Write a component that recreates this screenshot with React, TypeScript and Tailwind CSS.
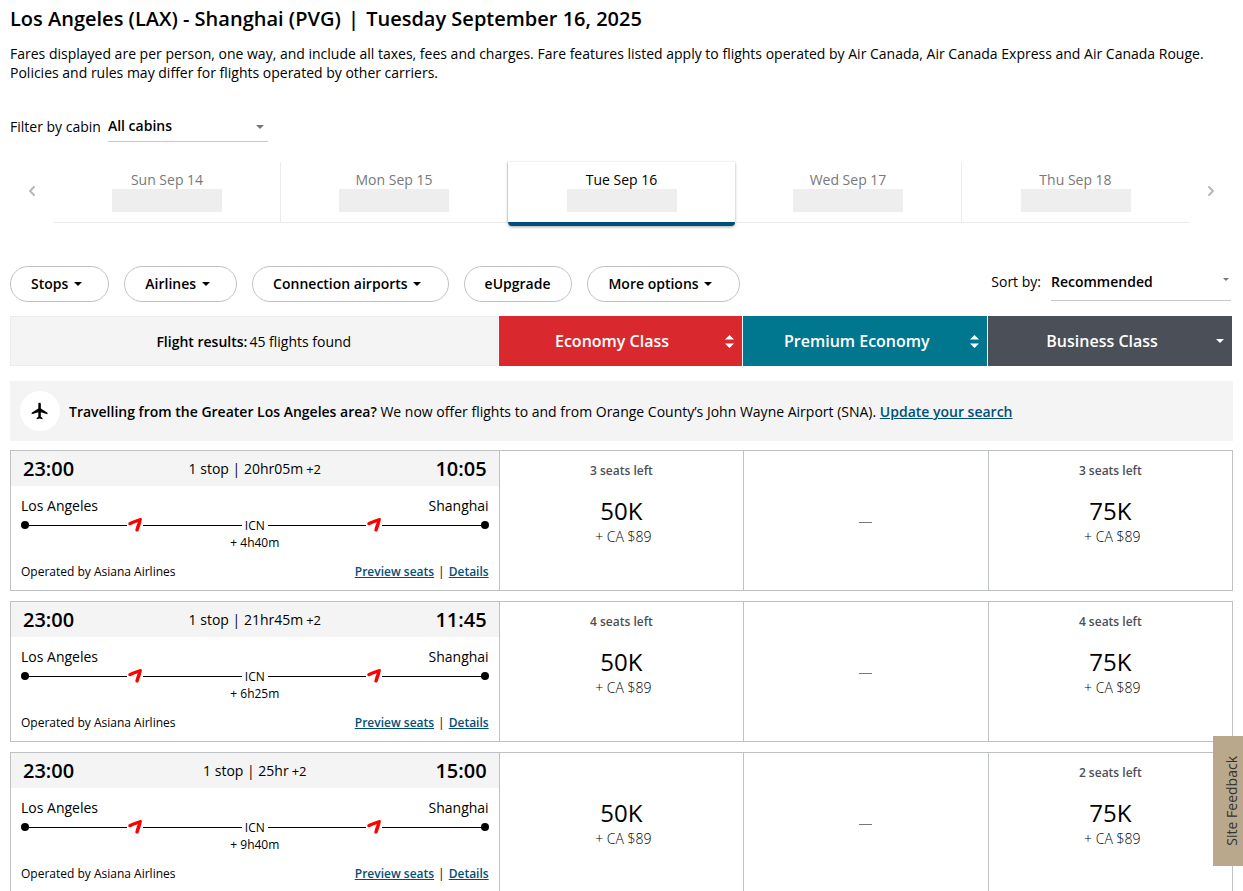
import { useState } from 'react';
import { ChevronLeft, ChevronRight } from 'lucide-react';
import { MdFlight } from 'react-icons/md';

const days = ['Sun Sep 14', 'Mon Sep 15', 'Tue Sep 16', 'Wed Sep 17', 'Thu Sep 18'];

const filters = [
  { label: 'Stops', menu: true },
  { label: 'Airlines', menu: true },
  { label: 'Connection airports', menu: true },
  { label: 'eUpgrade', menu: false },
  { label: 'More options', menu: true },
];

type Fare = { seats: number; points: string; cash: string } | null;

type Flight = {
  id: string;
  departs: string;
  arrives: string;
  duration: string;
  via: string;
  layover: string;
  fares: Fare[];
};

const flights: Flight[] = [
  {
    id: '1', departs: '23:00', arrives: '10:05', duration: '20hr05m', via: 'ICN', layover: '4h40m',
    fares: [{ seats: 3, points: '50K', cash: '$89' }, null, { seats: 3, points: '75K', cash: '$89' }],
  },
  {
    id: '2', departs: '23:00', arrives: '11:45', duration: '21hr45m', via: 'ICN', layover: '6h25m',
    fares: [{ seats: 4, points: '50K', cash: '$89' }, null, { seats: 4, points: '75K', cash: '$89' }],
  },
  {
    id: '3', departs: '23:00', arrives: '15:00', duration: '25hr', via: 'ICN', layover: '9h40m',
    fares: [{ seats: 0, points: '50K', cash: '$89' }, null, { seats: 2, points: '75K', cash: '$89' }],
  },
];

function Caret({ className }: { className?: string }) {
  return (
    <svg viewBox="0 0 8 4" className={className} fill="currentColor" aria-hidden="true">
      <path d="M0 0h8L4 4z" />
    </svg>
  );
}

function SortArrows() {
  return (
    <svg viewBox="0 0 9 13" className="w-[9px] h-[13px]" fill="currentColor" aria-hidden="true">
      <path d="M0 4.5h9L4.5 0zM0 8.5h9L4.5 13z" />
    </svg>
  );
}

function AsianaMark() {
  return (
    <svg viewBox="0 0 16 16" className="w-4 h-4 shrink-0" fill="#ff0000" aria-hidden="true">
      <path d="M1.2 6.4Q1.4 5.3 3 4.7Q8 2.6 13.2 1Q15 .8 14.9 2.4Q13.6 8.6 11.6 13.4Q10.9 15 9.2 14.5Q8 14 8.4 12.4Q9.2 9.2 10.8 5.3Q7 6.2 3.4 8.3Q1.2 8.4 1.2 6.4z" />
    </svg>
  );
}

function DateStrip() {
  const [selected, setSelected] = useState('Tue Sep 16');

  return (
    <div className="mt-5 flex h-[61px] items-stretch">
      <button aria-label="Previous dates" className="flex w-11 shrink-0 items-center justify-center pb-1 text-[#b5b8bb]">
        <ChevronLeft className="h-4 w-4" strokeWidth={3} />
      </button>
      <div className="grid flex-1 grid-cols-5">
        {days.map((day) =>
          day === selected ? (
            <button
              key={day}
              className="-mb-[3px] flex flex-col items-center rounded-b-sm border-b-4 border-[#004f7a] bg-white pt-2 text-sm leading-[19px] text-black shadow-[0_1px_3px_rgba(0,0,0,0.35)]"
            >
              <span>{day}</span>
              <span className="h-[23px] w-[110px] bg-[#eeeeee]" />
            </button>
          ) : (
            <button
              key={day}
              onClick={() => setSelected(day)}
              className="flex flex-col items-center border-r border-b border-[#ebebeb] pt-2 text-sm leading-[19px] text-[#77797c] last:border-r-0"
            >
              <span>{day}</span>
              <span className="h-[23px] w-[110px] bg-[#eeeeee]" />
            </button>
          ),
        )}
      </div>
      <button aria-label="Next dates" className="flex w-11 shrink-0 items-center justify-center pb-1 text-[#b5b8bb]">
        <ChevronRight className="h-4 w-4" strokeWidth={3} />
      </button>
    </div>
  );
}

function FareCell({ fare }: { fare: Fare }) {
  if (!fare) {
    return (
      <div className="flex items-center justify-center border-l border-[#bfc2c5] pt-1">
        <span className="h-px w-[13px] bg-[#75787b]" aria-label="Not available" />
      </div>
    );
  }

  return (
    <button className="flex flex-col items-center border-l border-[#bfc2c5] pt-2.5">
      <span className="h-5 text-xs leading-5 font-semibold text-[#4b4f54]">
        {fare.seats > 0 && `${fare.seats} seats left`}
      </span>
      <span className="mt-3 text-2xl leading-9">{fare.points}</span>
      <span className="ml-1 text-sm leading-4 font-light">+ CA {fare.cash}</span>
    </button>
  );
}

function FlightCard({ flight }: { flight: Flight }) {
  return (
    <article className="grid h-[141px] grid-cols-[399fr_200fr_200fr_200fr] border border-[#bfc2c5]">
      <div className="flex flex-col">
        <div className="flex h-[35px] items-center justify-between bg-[#f4f4f4] px-3">
          <span className="text-xl font-semibold">{flight.departs}</span>
          <span className="text-sm">
            1 stop | {flight.duration}
            <span className="ml-[3px] text-[13px]">+2</span>
          </span>
          <span className="text-xl font-semibold">{flight.arrives}</span>
        </div>
        <div className="px-2.5 pt-2.5">
          <div className="flex justify-between text-sm">
            <span>Los Angeles</span>
            <span>Shanghai</span>
          </div>
          <div className="mt-px flex h-4 items-center">
            <span className="h-2 w-2 rounded-full bg-black" />
            <span className="h-px flex-1 bg-black" />
            <AsianaMark />
            <span className="h-px flex-1 bg-black" />
            <span className="px-[3px] pt-0.5 text-xs">{flight.via}</span>
            <span className="h-px flex-1 bg-black" />
            <AsianaMark />
            <span className="h-px flex-1 bg-black" />
            <span className="h-2 w-2 rounded-full bg-black" />
          </div>
          <p className="mt-0.5 text-center text-xs leading-4">+ {flight.layover}</p>
          <div className="mt-[11px] flex justify-between text-xs leading-5">
            <span>Operated by Asiana Airlines</span>
            <span>
              <a href="#seats" className="font-semibold text-[#005078] underline">Preview seats</a>
              <span className="mx-1">|</span>
              <a href="#details" className="font-semibold text-[#005078] underline">Details</a>
            </span>
          </div>
        </div>
      </div>
      {flight.fares.map((fare, i) => (
        <FareCell key={i} fare={fare} />
      ))}
    </article>
  );
}

export default function App() {
  const [cabin, setCabin] = useState('All cabins');
  const [sort, setSort] = useState('Recommended');

  return (
    <main className="bg-white px-2.5 pt-[5px] font-['Open_Sans',sans-serif] text-black">
      <h1 className="text-xl leading-7 font-semibold">
        Los Angeles (LAX) - Shanghai (PVG) <span className="mx-0.5">|</span> Tuesday September 16, 2025
      </h1>
      <p className="mt-[11px] text-sm leading-[19px]">
        Fares displayed are per person, one way, and include all taxes, fees and charges. Fare features listed apply to
        flights operated by Air Canada, Air Canada Express and Air Canada Rouge. Policies and rules may differ for
        flights operated by other carriers.
      </p>

      <div className="mt-[29px] flex items-center text-sm">
        <label htmlFor="cabin">Filter by cabin</label>
        <div className="relative ml-[7px] w-40">
          <select
            id="cabin"
            value={cabin}
            onChange={(e) => setCabin(e.target.value)}
            className="h-[31px] w-full appearance-none border-b border-[#c8c8c8] bg-transparent font-semibold"
          >
            <option>All cabins</option>
            <option>Economy</option>
            <option>Business</option>
          </select>
          <Caret className="pointer-events-none absolute top-3.5 right-1 h-1 w-2 text-[#75787b]" />
        </div>
      </div>

      <DateStrip />

      <div className="mt-[43px] flex items-start justify-between">
        <div className="flex gap-[15px]">
          {filters.map((filter) => (
            <button
              key={filter.label}
              className="flex h-9 items-center rounded-full border border-[#bfc2c5] pr-[21px] pl-5 text-sm font-semibold"
            >
              {filter.label}
              {filter.menu && (
                <span className="flex w-[19px] justify-center">
                  <Caret className="h-1 w-2" />
                </span>
              )}
            </button>
          ))}
        </div>
        <div className="flex items-center text-sm">
          <label htmlFor="sort" className="pb-1">Sort by:</label>
          <div className="relative mr-0.5 ml-2.5 w-[180px]">
            <select
              id="sort"
              value={sort}
              onChange={(e) => setSort(e.target.value)}
              className="h-[35px] w-full appearance-none border-b border-[#c8c8c8] bg-transparent pb-0.5 font-semibold"
            >
              <option>Recommended</option>
              <option>Departure time</option>
              <option>Duration</option>
            </select>
            <Caret className="pointer-events-none absolute top-3 right-0.5 h-[3px] w-1.5 text-[#75787b]" />
          </div>
        </div>
      </div>

      <div className="mt-3.5 mr-px grid h-[50px] grid-cols-[2fr_1fr_1fr_1fr] gap-x-px text-base font-semibold text-white">
        <div className="flex items-center justify-center border border-[#ebebeb] bg-[#f4f4f4] pt-0.5 text-sm font-normal text-black">
          <strong className="mr-0.5 font-semibold">Flight results:</strong>
          45 flights found
        </div>
        <button className="flex items-center bg-[#d9292e] pr-2">
          <span className="flex-1">Economy Class</span>
          <SortArrows />
        </button>
        <button className="flex items-center bg-[#00778f] pr-2">
          <span className="flex-1">Premium Economy</span>
          <SortArrows />
        </button>
        <button className="flex items-center bg-[#4b4f57] pr-2">
          <span className="flex-1">Business Class</span>
          <Caret className="h-1 w-2" />
        </button>
      </div>

      <div className="mt-[15px] flex h-[60px] items-center bg-[#f4f4f4] px-2.5 text-sm">
        <span className="mr-[9px] flex h-10 w-10 items-center justify-center rounded-full bg-white">
          <MdFlight className="h-5 w-5" />
        </span>
        <p className="pt-0.5">
          <strong className="font-semibold">Travelling from the Greater Los Angeles area?</strong> We now offer flights
          to and from Orange County’s John Wayne Airport (SNA).{' '}
          <a href="#search" className="font-semibold text-[#005078] underline">Update your search</a>
        </p>
      </div>

      <section className="mt-[9px] flex flex-col gap-2.5">
        {flights.map((flight) => (
          <FlightCard key={flight.id} flight={flight} />
        ))}
      </section>

      <button className="fixed right-0 bottom-[25px] flex h-[130px] w-[30px] items-center justify-end bg-[#b9a88c] text-sm text-[#333333]">
        <span className="rotate-180 pl-[1px] text-center [writing-mode:vertical-rl]">Site Feedback</span>
      </button>
    </main>
  );
}
